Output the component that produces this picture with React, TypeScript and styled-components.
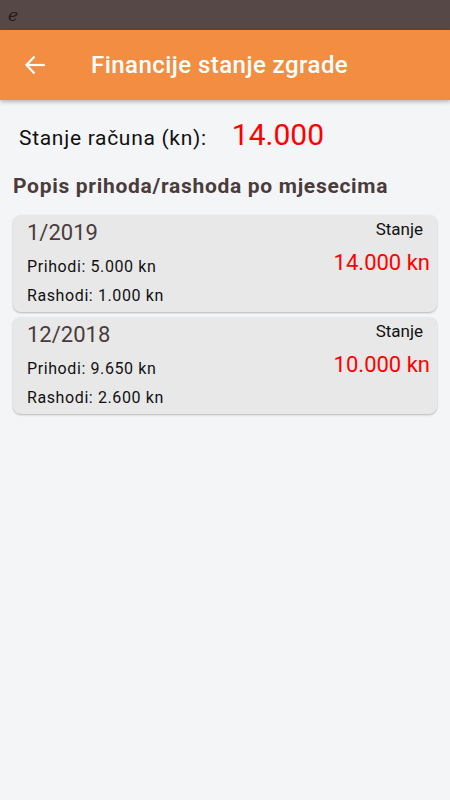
import React from 'react';
import styled, { createGlobalStyle } from 'styled-components';

interface MonthEntry {
  month: string;
  income: string;
  expense: string;
  balance: string;
}

const months: MonthEntry[] = [
  { month: '1/2019', income: '5.000 kn', expense: '1.000 kn', balance: '14.000 kn' },
  { month: '12/2018', income: '9.650 kn', expense: '2.600 kn', balance: '10.000 kn' },
];

const GlobalStyle = createGlobalStyle`
  html, body {
    margin: 0;
    padding: 0;
    background: #f4f5f7;
    font-family: Roboto, "Liberation Sans", sans-serif;
  }
`;

const Screen = styled.div`
  width: 450px;
  min-height: 800px;
  background: #f4f5f7;
  display: flex;
  flex-direction: column;
`;

const StatusBar = styled.div`
  height: 30px;
  background: #554846;
  display: flex;
  align-items: center;
  padding-left: 8px;
  font-family: "DejaVu Serif", serif;
  font-style: italic;
  font-size: 17px;
  color: #231a19;
`;

const AppBar = styled.header`
  height: 70px;
  background: #f28d42;
  display: flex;
  align-items: center;
  box-shadow: 0 2px 4px rgba(0, 0, 0, 0.25);
  position: relative;
  z-index: 1;

  h1 {
    margin: 0 0 0 46px;
    font-size: 24px;
    font-weight: 500;
    letter-spacing: 0.45px;
    color: #fff;
  }
`;

const BackButton = styled.button`
  border: 0;
  background: none;
  padding: 0;
  margin-left: 25px;
  width: 20px;
  height: 20px;
  display: flex;
  cursor: pointer;
`;

const Content = styled.main`
  padding: 0 13px;
`;

const Balance = styled.div`
  display: flex;
  align-items: baseline;
  margin: 17px 0 0 6px;
  height: 40px;

  span {
    font-size: 21px;
    letter-spacing: 0.7px;
    color: #111;
  }

  strong {
    font-size: 30px;
    font-weight: 400;
    color: #ff0000;
    margin-left: 25px;
  }
`;

const SectionTitle = styled.h2`
  margin: 17px 0 17px;
  font-size: 21px;
  font-weight: 700;
  letter-spacing: 0.7px;
  color: #4a3c3b;
`;

const List = styled.div`
  display: flex;
  flex-direction: column;
  gap: 5px;
`;

const Card = styled.div`
  background: #e8e8e8;
  border-radius: 8px;
  box-shadow: 0 1px 2px rgba(0, 0, 0, 0.25);
  height: 97px;
  display: flex;
  justify-content: space-between;
  padding: 0 7px 0 14px;
`;

const CardLeft = styled.div`
  display: flex;
  flex-direction: column;
`;

const Month = styled.div`
  font-size: 22px;
  color: #4a3c3b;
  margin: 5px 0 6px;
  line-height: 26px;
`;

const Line = styled.div`
  font-size: 16px;
  letter-spacing: 0.6px;
  color: #111;
  line-height: 29px;
`;

const CardRight = styled.div`
  display: flex;
  flex-direction: column;
  align-items: flex-end;
`;

const StanjeLabel = styled.div`
  font-size: 17px;
  color: #111;
  margin: 3px 7px 0 0;
  line-height: 22px;
`;

const StanjeValue = styled.div`
  font-size: 22px;
  color: #ff0000;
  margin-top: 10px;
  line-height: 26px;
`;

export default function App() {
  return (
    <Screen>
      <GlobalStyle />
      <StatusBar>e</StatusBar>
      <AppBar>
        <BackButton aria-label="Natrag">
          <svg width="20" height="20" viewBox="0 0 20 20" fill="none" stroke="#fff" strokeWidth="2.2">
            <path d="M20 10H1.5" />
            <path d="M9.5 1.5L1.5 10l8 8.5" />
          </svg>
        </BackButton>
        <h1>Financije stanje zgrade</h1>
      </AppBar>
      <Content>
        <Balance>
          <span>Stanje računa (kn):</span>
          <strong>14.000</strong>
        </Balance>
        <SectionTitle>Popis prihoda/rashoda po mjesecima</SectionTitle>
        <List>
          {months.map((m) => (
            <Card key={m.month}>
              <CardLeft>
                <Month>{m.month}</Month>
                <Line>Prihodi: {m.income}</Line>
                <Line>Rashodi: {m.expense}</Line>
              </CardLeft>
              <CardRight>
                <StanjeLabel>Stanje</StanjeLabel>
                <StanjeValue>{m.balance}</StanjeValue>
              </CardRight>
            </Card>
          ))}
        </List>
      </Content>
    </Screen>
  );
}
